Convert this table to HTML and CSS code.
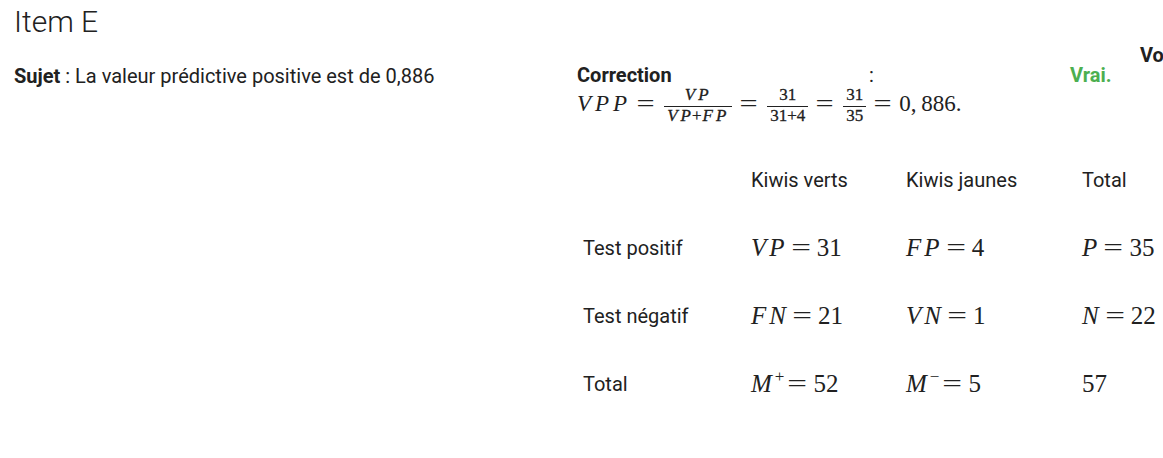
FILE: index.html
```html
<!DOCTYPE html>
<html lang="fr">
<head>
<meta charset="utf-8">
<link rel="stylesheet" href="styles.css">
</head>
<body>
<h1 class="title">Item E</h1>
<div class="item">
  <div class="col-left">
    <p class="sujet"><b>Sujet</b> : La valeur prédictive positive est de 0,886</p>
  </div>
  <div class="col-right">
    <div class="corr-row">
      <span class="corr-label">Correction</span>
      <span class="corr-colon">:</span>
      <span class="corr-vrai">Vrai.</span>
      <span class="corr-vo">Vo</span>
    </div>
    <div class="formula">
      <span class="t"><i>VPP</i></span><span class="t"><span class="eq">=</span></span><span class="frac"><span class="num"><i>VP</i></span><span class="den"><i>VP</i><span class="op">+</span><i>FP</i></span></span><span class="t"><span class="eq">=</span></span><span class="frac"><span class="num">31</span><span class="den">31+4</span></span><span class="t"><span class="eq">=</span></span><span class="frac"><span class="num">31</span><span class="den">35</span></span><span class="t"><span class="eq">=</span></span><span class="t">0,&#8201;886.</span>
    </div>
    <table class="tab">
      <tr class="head"><td></td><td>Kiwis verts</td><td>Kiwis jaunes</td><td>Total</td></tr>
      <tr><td>Test positif</td><td><span class="mx"><i>VP</i><span class="eq">=</span>31</span></td><td><span class="mx"><i>FP</i><span class="eq">=</span>4</span></td><td><span class="mx"><i>P</i><span class="eq">=</span>35</span></td></tr>
      <tr><td>Test négatif</td><td><span class="mx"><i>FN</i><span class="eq">=</span>21</span></td><td><span class="mx"><i>VN</i><span class="eq">=</span>1</span></td><td><span class="mx"><i>N</i><span class="eq">=</span>22</span></td></tr>
      <tr><td>Total</td><td><span class="mx"><i>M</i><sup>+</sup><span class="eq">=</span>52</span></td><td><span class="mx"><i>M</i><sup>−</sup><span class="eq">=</span>5</span></td><td><span class="mx">57</span></td></tr>
    </table>
  </div>
</div>
</body>
</html>
```

FILE: styles.css
```css
html { overflow: hidden; }
body {
  margin: 0;
  padding: 0 0 0 14px;
  font-family: Roboto, "Liberation Sans", sans-serif;
  color: #212121;
  background: #fff;
}
.title {
  font-weight: 300;
  font-size: 30px;
  line-height: 36px;
  margin: 4px 0 0 0;
  color: #212121;
}
.item {
  display: grid;
  grid-template-columns: 563px 1fr;
  overflow: hidden;
}
.sujet {
  margin: 24px 0 0 0;
  font-size: 20px;
  line-height: 24px;
  white-space: nowrap;
}
.sujet b { font-weight: 700; }
.col-right { padding-top: 3px; min-width: 0; }
.corr-row {
  display: flex;
  align-items: flex-end;
  font-size: 20px;
  line-height: 24px;
  height: 44px;
  white-space: nowrap;
}
.corr-label { font-weight: 700; width: 292px; flex: none; }
.corr-colon { width: 201px; flex: none; }
.corr-vrai { font-weight: 700; color: #4caf50; width: 70px; flex: none; }
.corr-vo { font-weight: 700; align-self: flex-start; flex: none; }

.formula {
  font-family: "Liberation Serif", "DejaVu Serif", serif;
  font-size: 23px;
  display: flex;
  align-items: center;
  height: 40px;
  white-space: nowrap;
}
.formula .t { line-height: 23px; padding-bottom: 7px; }
.formula .t i { letter-spacing: 4px; }
.eq {
  display: inline-block;
  font-style: normal;
  transform: scaleX(1.4);
  margin: 0 9px 0 6px;
}
.formula .eq { margin: 0 10px 0 8px; }
.frac {
  display: inline-flex;
  flex-direction: column;
  align-items: stretch;
  font-size: 17px;
  line-height: 17px;
  -webkit-text-stroke: 0.3px #212121;
  padding: 0 2px;
}
.frac i { letter-spacing: 3px; }
.op { margin-left: -2px; margin-right: 1px; }
.num, .den { box-sizing: border-box; text-align: center; }
.num { padding: 0 3px 3px; border-bottom: 1px solid #212121; }
.den { padding: 0 3px 4px; }

.tab {
  border-collapse: collapse;
  margin-top: 19px;
  font-size: 20px;
  white-space: nowrap;
}
.tab td {
  padding: 0 6px;
  height: 68px;
  vertical-align: middle;
}
.tab td:nth-child(1) { width: 156px; }
.tab td:nth-child(2) { width: 143px; }
.tab td:nth-child(3) { width: 164px; }
.mx {
  font-family: "Liberation Serif", "DejaVu Serif", serif;
  font-size: 25px;
}
.mx i { letter-spacing: 3px; }
.mx sup { font-size: 17px; vertical-align: 10px; line-height: 0; }
```
